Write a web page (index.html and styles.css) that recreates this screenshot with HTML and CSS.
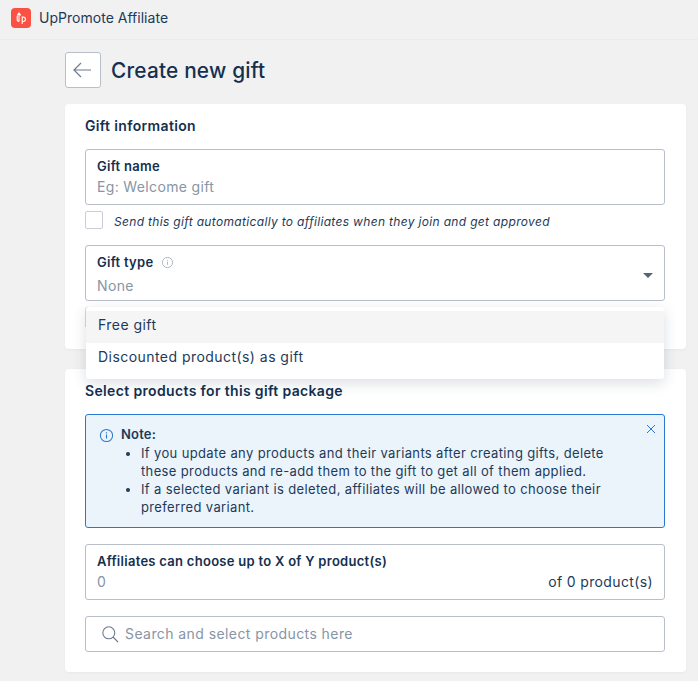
FILE: index.html
```html
<!DOCTYPE html>
<html lang="en">
<head>
<meta charset="utf-8">
<title>Create new gift</title>
<link rel="stylesheet" href="styles.css">
</head>
<body>
<header class="topbar">
  <span class="logo"><svg viewBox="0 0 20 20" width="20" height="20"><path d="M6.200 7.500L8 5l1.800 2.500M8 5v8.500M6.200 8v3.500a1.800 1.800 0 0 0 1.800 2M11.200 8.500v7.500M11.200 9h1a2 2 0 0 1 0 4.500h-1" fill="none" stroke="#fff" stroke-width="1.100"/></svg></span>
  <span class="brand">UpPromote Affiliate</span>
</header>
<main class="page">
  <div class="heading">
    <button class="back" type="button"><svg viewBox="0 0 24 24" width="24" height="24"><path d="M20 12H3M10 5l-7 7 7 7" fill="none" stroke="#6d7b8c" stroke-width="1.200"/></svg></button>
    <h1>Create new gift</h1>
  </div>
  <section class="card first">
    <h2>Gift information</h2>
    <div class="field name-field">
      <label>Gift name</label>
      <div class="placeholder">Eg: Welcome gift</div>
    </div>
    <div class="check-row">
      <span class="checkbox"></span>
      <em>Send this gift automatically to affiliates when they join and get approved</em>
    </div>
    <div class="field type-field">
      <label>Gift type <svg class="hint" viewBox="0 0 14 14" width="13" height="13"><circle cx="7" cy="7" r="5.500" fill="none" stroke="#a9b3bf"/><path d="M7 6.200v3.300M7 4.200v1" stroke="#a9b3bf"/></svg></label>
      <div class="placeholder">None</div>
      <span class="caret"></span>
      <ul class="menu">
        <li class="active">Free gift</li>
        <li>Discounted product(s) as gift</li>
      </ul>
    </div>
    <div class="under"></div>
  </section>
  <section class="card second">
    <h2>Select products for this gift package</h2>
    <div class="note">
      <svg class="note-icon" viewBox="0 0 16 16" width="15" height="15"><circle cx="8" cy="8" r="6.500" fill="none" stroke="#2a78d4" stroke-width="1.100"/><path d="M8 7v4.200M8 4.500v1.300" stroke="#2a78d4" stroke-width="1.200"/></svg>
      <div class="note-body">
        <strong>Note:</strong>
        <ul>
          <li>If you update any products and their variants after creating gifts, delete these products and re-add them to the gift to get all of them applied.</li>
          <li>If a selected variant is deleted, affiliates will be allowed to choose their preferred variant.</li>
        </ul>
      </div>
      <svg class="close" viewBox="0 0 10 10" width="10" height="10"><path d="M1 1l8 8M9 1l-8 8" stroke="#2a78d4" stroke-width="1"/></svg>
    </div>
    <div class="field count-field">
      <label>Affiliates can choose up to X of Y product(s)</label>
      <div class="count-row"><span class="placeholder">0</span><span class="suffix">of 0 product(s)</span></div>
    </div>
    <div class="search">
      <svg viewBox="0 0 18 18" width="18" height="18"><circle cx="7.800" cy="7.800" r="6" fill="none" stroke="#6b7a8c" stroke-width="1.100"/><path d="M12 12l5 5" stroke="#6b7a8c" stroke-width="1.100"/></svg>
      <span class="placeholder search-text">Search and select products here</span>
    </div>
  </section>
</main>
</body>
</html>
```
FILE: styles.css
```css
* { box-sizing: border-box; }
html, body { margin: 0; height: 681px; overflow: hidden; }
body { background: #f1f1f1; color: #14304f; font-family: Inter, "Liberation Sans", sans-serif; font-size: 14px; }
.topbar { height: 40px; display: flex; align-items: center; padding: 0 0 4px 11px; gap: 8px; border-bottom: 1px solid #ebebeb; }
.logo { width: 20px; height: 20px; border-radius: 4px; background: #fb5044; display: flex; }
.brand { font-size: 14px; letter-spacing: .02px; color: #1d3a59; }
.page { margin-left: 65px; width: 621px; }
.heading { display: flex; align-items: center; gap: 10px; margin-top: 12px; height: 36px; }
.back { width: 36px; height: 36px; padding: 0; background: #fff; border: 1px solid #b8bfc9; border-radius: 3px; display: flex; align-items: center; justify-content: center; }
h1 { margin: 0; font-size: 20.800px; font-weight: 500; letter-spacing: .2px; color: #14304f; }
.card { background: #fff; border-radius: 4px; padding: 14px 20px 0; box-shadow: 0 1px 3px rgba(0,0,0,.04); }
.first { margin-top: 16px; height: 245px; }
.second { margin-top: 20px; height: 303px; }
h2 { margin: 0; font-size: 14px; line-height: 16px; font-weight: 600; letter-spacing: .35px; color: #14304f; }
.field { position: relative; border: 1px solid #b8bfc9; border-radius: 3px; padding: 8px 11px 0; background: #fff; }
label { display: flex; align-items: center; gap: 8px; font-size: 13px; line-height: 16px; font-weight: 600; letter-spacing: .28px; color: #14304f; }
.placeholder { color: #8795a5; font-size: 14px; letter-spacing: .35px; line-height: 20px; }
.search-text { letter-spacing: .42px; }
.name-field { margin-top: 15px; width: 580px; height: 56px; }
.name-field .placeholder { margin-top: 3px; }
.check-row { display: flex; align-items: center; gap: 11px; margin-top: 6px; height: 18px; }
.checkbox { width: 18px; height: 18px; border: 1px solid #c9ced6; border-radius: 2px; background: #fff; }
em { font-size: 12px; letter-spacing: .33px; padding-top: 2px; color: #1d3a59; }
.type-field { margin-top: 16px; width: 580px; height: 56px; }
.type-field .placeholder { margin-top: 6px; }
.hint { display: block; }
.caret { position: absolute; right: 11px; top: 27px; border: 5px solid transparent; border-top: 5px solid #54657a; border-bottom: 0; }
.menu { position: absolute; z-index: 2; left: 0; top: 61px; width: 578px; height: 72px; margin: 0; padding: 4px 0 0; list-style: none; background: #fff; border-radius: 3px; box-shadow: 0 4px 14px rgba(30,50,80,.16); }
.menu li { height: 32px; padding-left: 12px; line-height: 27px; font-size: 14px; letter-spacing: .45px; color: #1d3a59; }
.menu .active { background: #f5f5f5; }
.under { width: 20px; height: 20px; margin-top: 6px; border: 1px solid #d5d8dd; border-right: 0; border-bottom: 0; border-radius: 3px 0 0 0; }
.note { position: relative; display: flex; gap: 7px; width: 580px; height: 114px; margin-top: 15px; padding: 10px 13px 0; border: 1px solid #2a78d4; border-radius: 3px; background: #ebf4fb; }
.note-icon { flex: none; margin-top: 3px; }
.note-body { width: 520px; font-size: 13px; line-height: 18px; color: #1d3a59; }
.note-body strong { font-size: 13px; font-weight: 600; letter-spacing: .2px; }
.note-body ul { margin: 1px 0 0; padding-left: 20px; }
.note-body li { letter-spacing: .36px; }
.close { position: absolute; right: 8px; top: 9px; }
.count-field { margin-top: 16px; width: 580px; height: 56px; }
.count-row { display: flex; justify-content: space-between; margin-top: 3px; }
.suffix { font-size: 14px; letter-spacing: .37px; line-height: 20px; color: #1d3a59; }
.search { display: flex; align-items: center; gap: 6px; margin-top: 16px; width: 580px; height: 36px; padding-left: 15px; border: 1px solid #b8bfc9; border-radius: 3px; background: #fff; }
```
